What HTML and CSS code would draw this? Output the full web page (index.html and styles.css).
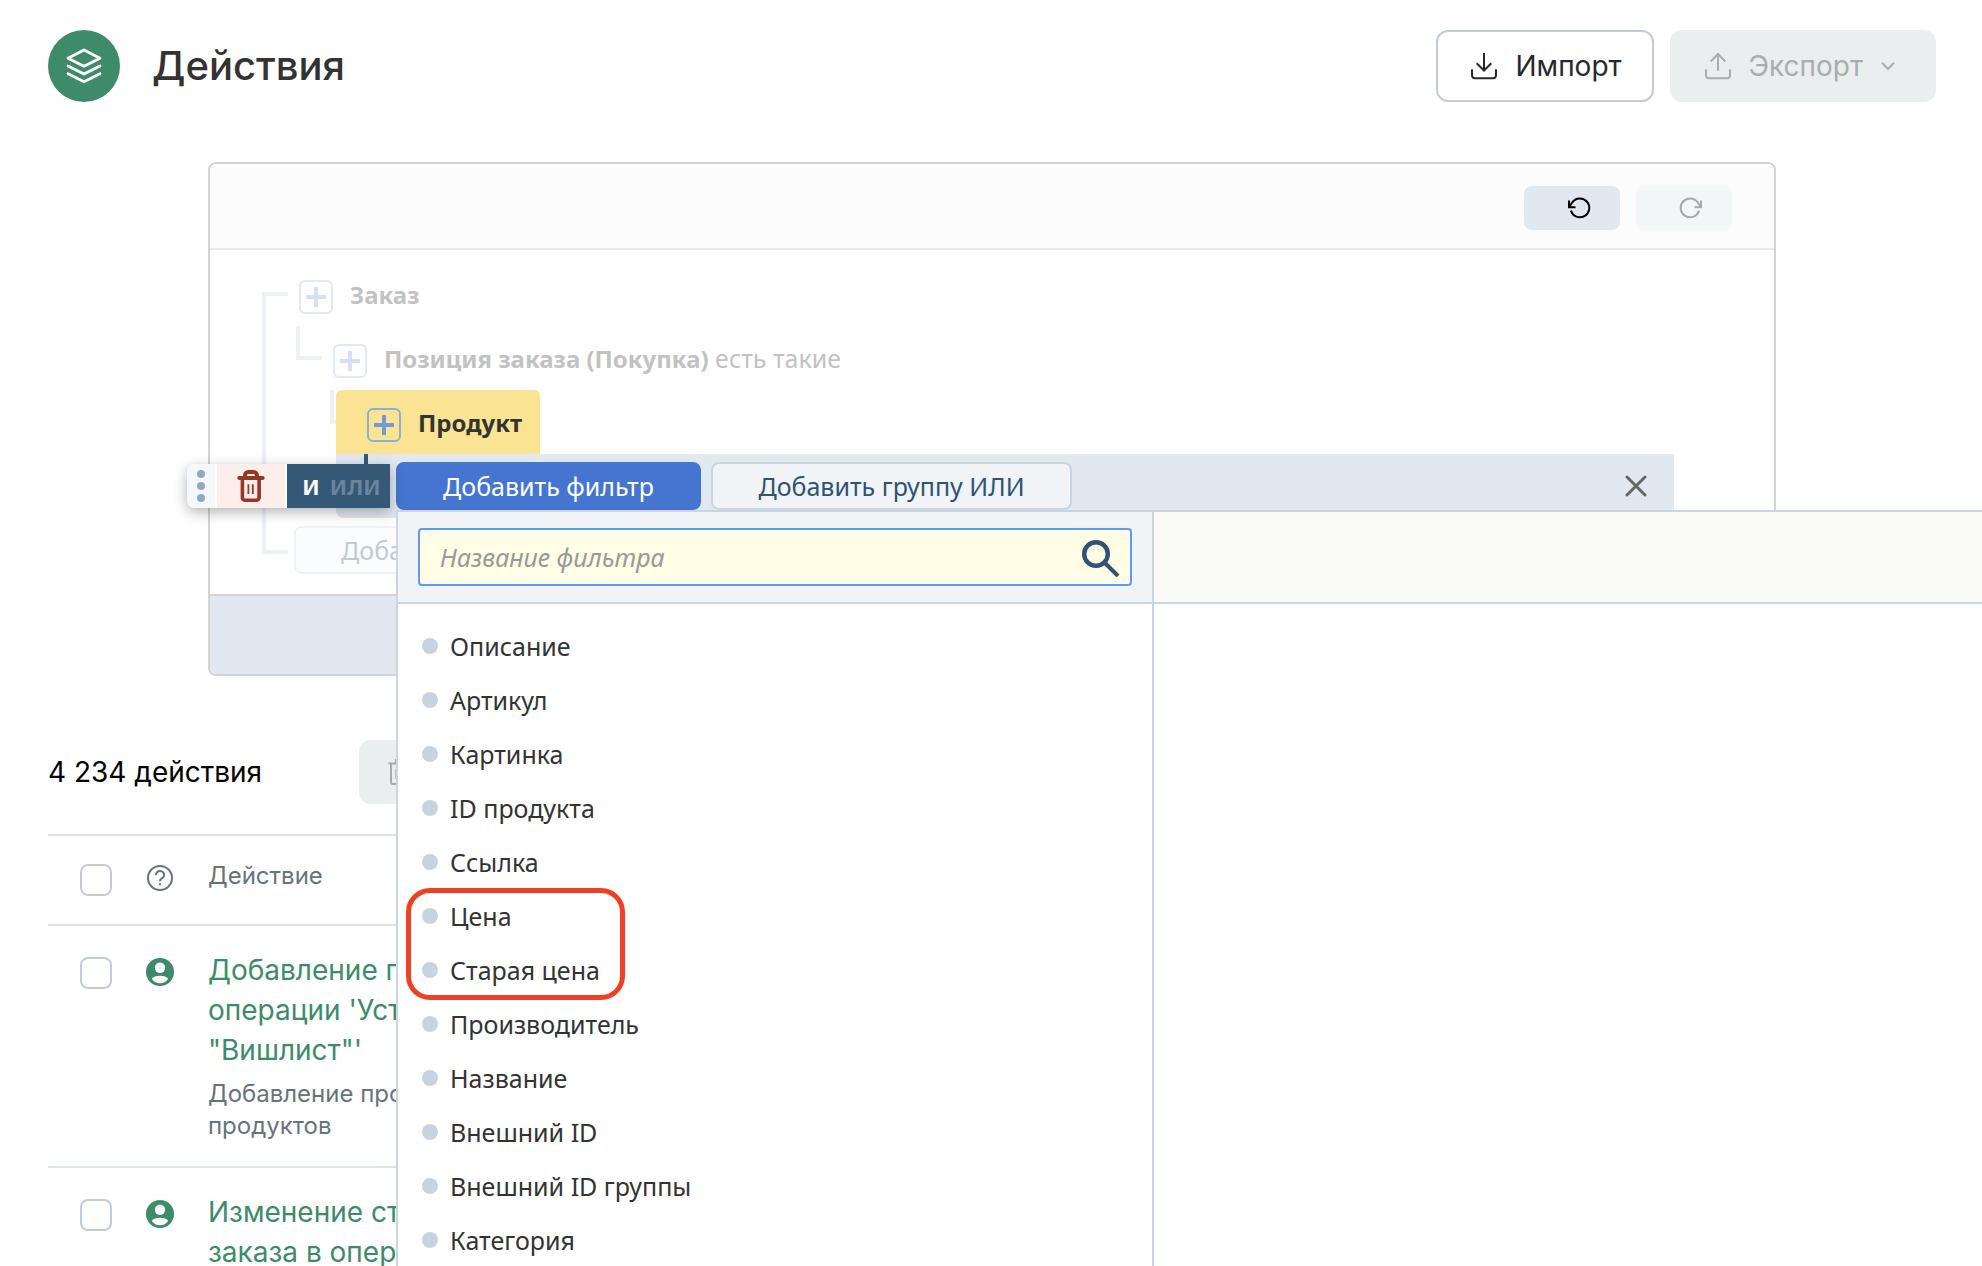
FILE: index.html
```html
<!DOCTYPE html>
<html lang="ru">
<head>
<meta charset="utf-8">
<meta name="viewport" content="width=device-width, initial-scale=1">
<title>Действия</title>
<link rel="stylesheet" href="styles.css">
</head>
<body>
<div class="page">
  <header class="page-header">
    <span class="page-logo">
      <svg width="36" height="36" viewBox="0 0 36 36" fill="none" stroke="#fff" stroke-width="2.8" stroke-linecap="round" stroke-linejoin="round" aria-hidden="true">
        <path d="M18 2 34 10.2 18 18.2 2 10.2Z"/>
        <path d="M2 18 18 26 34 18"/>
        <path d="M2 25.7 18 33.7 34 25.7"/>
      </svg>
    </span>
    <h1 class="page-title">Действия</h1>
    <div class="header-actions">
      <button class="btn btn-outline" type="button">
        <svg width="28" height="28" viewBox="0 0 28 28" fill="none" stroke="currentColor" stroke-width="2" aria-hidden="true">
          <path d="M14 1V18.5M6.7 11.3 14 18.5 21.3 11.3"/>
          <path d="M2 17.3V23.3A3 3 0 0 0 5 26.2H23A3 3 0 0 0 26 23.3V17.3"/>
        </svg>
        Импорт
      </button>
      <button class="btn btn-muted" type="button" disabled>
        <svg width="28" height="28" viewBox="0 0 28 28" fill="none" stroke="currentColor" stroke-width="2" aria-hidden="true">
          <path d="M14 18.7V2M6.7 9.5 14 2 21.3 9.5"/>
          <path d="M2 17.3V23.3A3 3 0 0 0 5 26.2H23A3 3 0 0 0 26 23.3V17.3"/>
        </svg>
        Экспорт
        <svg width="16" height="16" viewBox="0 0 16 16" fill="none" stroke="currentColor" stroke-width="2" aria-hidden="true">
          <path d="M2 4.8 8 11 14 4.8"/>
        </svg>
      </button>
    </div>
  </header>

  <section class="builder" aria-label="Фильтр">
    <div class="builder-toolbar">
      <button class="history-btn" type="button" aria-label="Отменить">
        <svg width="24" height="24" viewBox="0 0 24 24" fill="none" stroke="currentColor" stroke-width="2" aria-hidden="true">
          <path d="M1 4.5V11.3H7.5"/>
          <path d="M1 11.3 4.4 6.2A9.4 9.4 0 1 1 2.9 14.6"/>
        </svg>
      </button>
      <button class="history-btn" type="button" aria-label="Повторить" disabled>
        <svg width="24" height="24" viewBox="0 0 24 24" fill="none" stroke="currentColor" stroke-width="2" aria-hidden="true">
          <path d="M23 4.5V11.3H16.5"/>
          <path d="M23 11.3 19.6 6.2A9.4 9.4 0 1 0 21.1 14.6"/>
        </svg>
      </button>
    </div>

    <div class="tree">
      <span class="tree-bracket"></span>
      <div class="node node-root">
        <button class="add-btn" type="button" aria-label="Добавить в заказ"></button>
        <strong>Заказ</strong>
      </div>
      <div class="node node-child">
        <button class="add-btn" type="button" aria-label="Добавить в позицию"></button>
        <span><strong>Позиция заказа (Покупка)</strong> есть такие</span>
      </div>
      <div class="node node-active">
        <div class="node-label">
          <button class="add-btn" type="button" aria-label="Добавить в продукт"></button>
          <strong>Продукт</strong>
        </div>
      </div>

      <div class="group">
        <button class="filter-btn filter-btn-primary" type="button">Добавить фильтр</button>
        <button class="filter-btn filter-btn-wide" type="button">Добавить группу ИЛИ</button>
        <button class="close-btn" type="button" aria-label="Закрыть">
          <svg width="24" height="24" viewBox="0 0 24 24" fill="none" stroke="currentColor" stroke-width="3" stroke-linecap="round" aria-hidden="true">
            <path d="M3 3 21 21M21 3 3 21"/>
          </svg>
        </button>

        <div class="group-controls">
          <button class="drag-handle" type="button" aria-label="Переместить"><i></i><i></i><i></i></button>
          <button class="delete-btn" type="button" aria-label="Удалить группу">
            <svg width="28" height="32" viewBox="0 0 28 32" fill="none" stroke="currentColor" aria-hidden="true">
              <path d="M2.3 8H25.7" stroke-width="4" stroke-linecap="round"/>
              <path d="M8 7V5.4A3.4 3.4 0 0 1 11.4 2H16.6A3.4 3.4 0 0 1 20 5.4V7" stroke-width="4"/>
              <path d="M5.4 9V27.5A2.7 2.7 0 0 0 8.1 30.2H19.4A2.7 2.7 0 0 0 22.1 27.5V9" stroke-width="3.6"/>
              <path d="M11.4 14.3V24M15.8 14.3V24" stroke-width="1.8"/>
            </svg>
          </button>
          <button class="logic-btn" type="button"><b>И</b><b class="logic-off">ИЛИ</b></button>
        </div>

        <div class="picker">
          <div class="picker-search">
            <label class="search-box">
              <input class="search-input" type="text" placeholder="Название фильтра" aria-label="Название фильтра">
              <svg width="40" height="40" viewBox="0 0 40 40" fill="none" stroke="#2f5275" stroke-width="4.4" aria-hidden="true">
                <circle cx="16" cy="17" r="11.8"/>
                <path d="M25.5 26.5 38 39" stroke-width="4"/>
              </svg>
            </label>
          </div>
          <div class="picker-details-head"></div>
          <ul class="picker-list">
            <li>Описание</li>
            <li>Артикул</li>
            <li>Картинка</li>
            <li>ID продукта</li>
            <li>Ссылка</li>
            <li>Цена</li>
            <li>Старая цена</li>
            <li>Производитель</li>
            <li>Название</li>
            <li>Внешний ID</li>
            <li>Внешний ID группы</li>
            <li>Категория</li>
          </ul>
          <div class="picker-details"></div>
        </div>
      </div>

      <div class="tree-footer">
        <button class="filter-btn filter-btn-faded" type="button">Добавить фильтр</button>
      </div>
    </div>
    <div class="builder-footer"></div>
  </section>

  <div class="list-bar">
    <span class="list-count">4 234 действия</span>
    <button class="remove-btn" type="button" aria-label="Удалить" disabled>
      <svg width="28" height="28" viewBox="0 0 28 28" fill="none" stroke="currentColor" stroke-width="2" aria-hidden="true">
        <path d="M1.5 5.6H26.5M9 5.6V2H19V5.6M4 5.6V24A2 2 0 0 0 6 26H22A2 2 0 0 0 24 24V5.6M9.3 11V21M18.7 11V21"/>
      </svg>
    </button>
  </div>

  <table class="actions">
    <colgroup><col class="col-check"><col class="col-icon"><col></colgroup>
    <thead>
      <tr>
        <th class="cell-check"><input class="check" type="checkbox" aria-label="Выбрать все"></th>
        <th class="cell-icon">
          <svg width="28" height="28" viewBox="0 0 28 28" fill="none" stroke="#66747a" stroke-width="2" aria-hidden="true">
            <circle cx="14" cy="14" r="12"/>
            <path d="M10 11.2A4.1 3.9 0 1 1 16.5 14C14.8 15 14 15.3 14 17.2"/>
            <path d="M14 19.2V21.2"/>
          </svg>
        </th>
        <th>Действие</th>
      </tr>
    </thead>
    <tbody>
      <tr>
        <td class="cell-check"><input class="check" type="checkbox" aria-label="Выбрать действие"></td>
        <td class="cell-icon">
          <svg width="28" height="28" viewBox="0 0 28 28" aria-hidden="true">
            <circle cx="14" cy="14" r="14" fill="#3d8b69"/>
            <circle cx="14" cy="9.8" r="5.2" fill="#fff"/>
            <path d="M5.7 20.7Q8 17.8 14 17.8T22.3 20.7Q19 25.3 14 25.3T5.7 20.7Z" fill="#fff"/>
          </svg>
        </td>
        <td>
          <a class="action-link" href="#">Добавление п<br>операции 'Уст<br>"Вишлист"'</a>
          <p class="action-note">Добавление про<br>продуктов</p>
        </td>
      </tr>
      <tr>
        <td class="cell-check"><input class="check" type="checkbox" aria-label="Выбрать действие"></td>
        <td class="cell-icon">
          <svg width="28" height="28" viewBox="0 0 28 28" aria-hidden="true">
            <circle cx="14" cy="14" r="14" fill="#3d8b69"/>
            <circle cx="14" cy="9.8" r="5.2" fill="#fff"/>
            <path d="M5.7 20.7Q8 17.8 14 17.8T22.3 20.7Q19 25.3 14 25.3T5.7 20.7Z" fill="#fff"/>
          </svg>
        </td>
        <td><a class="action-link" href="#">Изменение ст<br>заказа в опер</a></td>
      </tr>
    </tbody>
  </table>
</div>
</body>
</html>
```
FILE: styles.css
```css
*,
*::before,
*::after { box-sizing: border-box; }

body {
  margin: 0;
  font-family: Inter, "Liberation Sans", sans-serif;
  font-size: 28px;
  color: #333;
  background: #fff;
}

button {
  margin: 0;
  padding: 0;
  border: 0;
  background: none;
  font: inherit;
  color: inherit;
}

svg { display: block; flex: none; }

.page {
  height: 100vh;
  overflow: hidden;
  padding: 30px 46px 0 48px;
}

/* Header */
.page-header { display: flex; align-items: center; }

.page-logo {
  display: flex;
  align-items: center;
  justify-content: center;
  width: 72px;
  height: 72px;
  border-radius: 50%;
  background: #3d8b69;
}

.page-title {
  margin: 0 0 0 32px;
  font-size: 40px;
  font-weight: 500;
  line-height: 46px;
}

.header-actions { display: flex; gap: 16px; margin-left: auto; }

.btn {
  display: flex;
  align-items: center;
  gap: 17px;
  height: 72px;
  padding: 0 30px 0 32px;
  border: 2px solid transparent;
  border-radius: 12px;
}

.btn-outline { border-color: #c0cdd6; color: #26282e; background: #fff; }
.btn-muted { padding-right: 38px; color: #a9adae; background: #eaeeef; }

/* Filter builder */
.builder {
  margin: 60px 160px 0;
  border: 2px solid #d3d3d3;
  border-radius: 8px;
  font-family: "Noto Sans", "Open Sans", sans-serif;
  font-size: 25px;
}

.builder-toolbar {
  display: flex;
  justify-content: flex-end;
  gap: 16px;
  padding: 22px 42px 18px;
  border-bottom: 2px solid #e4eaee;
  border-radius: 6px 6px 0 0;
  background: #fcfcfc;
}

.history-btn {
  display: flex;
  align-items: center;
  justify-content: center;
  width: 96px;
  height: 44px;
  padding-left: 16px;
  border-radius: 8px;
  background: #e1e8ef;
  color: #000;
}

.history-btn:disabled { padding-left: 12px; background: #f2f6f7; color: #a8a8a8; }

.builder-footer {
  height: 80px;
  border-top: 2px solid #d3d3d3;
  border-radius: 0 0 6px 6px;
  background: #e1e8ef;
}

.tree { position: relative; padding: 12px 0 12px 84px; }

.tree-bracket {
  position: absolute;
  top: 42px;
  left: 52px;
  width: 26px;
  height: 262px;
  border: 4px solid #edf1f6;
  border-right: 0;
}

.node {
  position: relative;
  display: flex;
  align-items: center;
  gap: 17px;
  height: 64px;
  color: #c2c2c2;
}

.node strong { font-size: 24px; }

.node-root { padding-left: 5px; }
.node-child { padding-left: 39px; }
.node-active { padding-left: 42px; color: #333; }

.node-child::before,
.node-active::before {
  content: "";
  position: absolute;
  top: 0;
  left: 2px;
  width: 26px;
  height: 34px;
  border: solid #edf1f6;
  border-width: 0 0 4px 4px;
}

.node-active::before { left: 36px; }

.node-label {
  position: relative;
  display: flex;
  align-items: center;
  gap: 17px;
  height: 64px;
  padding: 0 18px 0 31px;
  border-radius: 6px 6px 0 0;
  background: #fae392;
}

.add-btn {
  width: 34px;
  height: 34px;
  margin-top: 6px;
  border: 2px solid #dfe7f8;
  border-radius: 6px;
  color: #d6e0f5;
  background:
    linear-gradient(currentColor, currentColor) center / 20px 4px no-repeat,
    linear-gradient(currentColor, currentColor) center / 4px 20px no-repeat;
}

.node-label .add-btn { border-color: #93add0; color: #7299dc; }

.group {
  position: relative;
  display: flex;
  align-items: flex-start;
  gap: 10px;
  height: 64px;
  margin: 0 100px 0 42px;
  padding: 8px 26px 0 60px;
  border-radius: 0 0 8px 8px;
  background: #e1e8ef;
}

.group::before {
  content: "";
  position: absolute;
  top: 0;
  left: 28px;
  width: 4px;
  height: 10px;
  background: #355877;
}

.filter-btn {
  min-width: 305px;
  height: 48px;
  border: 2px solid #c9d5df;
  border-radius: 8px;
  background: #f0f4f7;
  color: #2f5275;
}

.filter-btn-wide { min-width: 361px; }
.filter-btn-primary { border-color: #4575d1; background: #4575d1; color: #fff; }
.filter-btn-faded { border-color: #eff2f5; background: #fbfcfd; color: #c0cbd6; }

.close-btn { margin: 12px 0 0 auto; color: #666; }

.tree-footer { display: flex; align-items: center; height: 64px; }

.group-controls {
  position: absolute;
  top: 10px;
  left: -149px;
  display: flex;
  gap: 2px;
  height: 44px;
  border-radius: 8px 0 0 8px;
  background: #fff;
  box-shadow: 0 4px 14px rgba(0, 0, 0, 0.3);
}

.drag-handle {
  display: flex;
  flex-direction: column;
  align-items: center;
  justify-content: center;
  gap: 4px;
  width: 28px;
  border-radius: 8px 0 0 8px;
  background: #f5f8fb;
}

.drag-handle i {
  width: 8px;
  height: 8px;
  border-radius: 50%;
  background: #8faac0;
}

.delete-btn {
  display: flex;
  align-items: center;
  justify-content: center;
  width: 68px;
  background: #fdeeeb;
  color: #963726;
}

.logic-btn {
  display: flex;
  align-items: center;
  justify-content: center;
  gap: 10px;
  width: 103px;
  padding-left: 6px;
  background: #355877;
  color: #fff;
  font-size: 22px;
}

.logic-off { color: #6a849b; }

/* Filter picker */
.picker {
  position: absolute;
  z-index: 2;
  top: 56px;
  left: 60px;
  display: grid;
  grid-template-columns: 756px 1fr;
  width: calc(100vw - 396px);
  border: solid #c9d5df;
  border-width: 2px 0 0 2px;
  background: #fff;
}

.picker-search,
.picker-details-head { border-bottom: 2px solid #c9d5df; }

.picker-search,
.picker-list { border-right: 2px solid #c9d5df; }

.picker-search { padding: 16px 20px; background: #f0f4f7; }
.picker-details-head { background: #fafbf6; }

.search-box {
  display: flex;
  align-items: center;
  height: 58px;
  padding: 0 10px 0 20px;
  border: 2px solid #6496f5;
  border-radius: 4px;
  background: #fffde6;
}

.search-input {
  flex: 1;
  min-width: 0;
  padding: 0;
  border: 0;
  outline: 0;
  background: none;
  font: inherit;
}

.search-input::placeholder { color: #999; font-style: italic; opacity: 1; }

.picker-list {
  position: relative;
  margin: 0;
  padding: 15px 24px;
  list-style: none;
}

.picker-list li {
  display: flex;
  align-items: center;
  gap: 12px;
  height: 54px;
}

.picker-list li::before {
  content: "";
  width: 16px;
  height: 16px;
  border-radius: 50%;
  background: #c8d3e0;
}

/* Red outline round the price filters */
.picker-list::after {
  content: "";
  position: absolute;
  top: 284px;
  left: 8px;
  width: 219px;
  height: 112px;
  border: 5px solid #ef4023;
  border-radius: 24px;
}

/* Actions list */
.list-bar {
  display: flex;
  align-items: center;
  height: 64px;
  margin-top: 64px;
  color: #000;
}

.list-count { width: 311px; }

.remove-btn {
  height: 64px;
  padding: 0 28px;
  border-radius: 12px;
  background: #eaeeef;
  color: #a9a9a9;
}

.actions {
  width: 100%;
  margin-top: 30px;
  border-top: 2px solid #dce4e8;
  border-spacing: 0;
  table-layout: fixed;
}

.col-check,
.col-icon { width: 80px; }

.actions th,
.actions td {
  padding: 24px 0;
  border-bottom: 2px solid #dce4e8;
  text-align: left;
  vertical-align: top;
}

.actions th {
  height: 90px;
  color: #66747a;
  font-size: 24px;
  font-weight: 400;
  line-height: 32px;
}

.actions .cell-check { padding-left: 32px; }
.actions .cell-icon { padding-left: 18px; }
.actions td.cell-check { padding-top: 27px; }
.actions td.cell-icon { padding-top: 28px; }
.cell-icon svg { margin-top: 4px; }

.check {
  display: block;
  width: 32px;
  height: 32px;
  margin: 4px 0 0;
  appearance: none;
  border: 2px solid #c1cdd6;
  border-radius: 8px;
  background: #fff;
}

.action-link {
  display: block;
  color: #3d8b69;
  line-height: 40px;
  text-decoration: none;
}

.action-note {
  margin: 8px 0 0;
  color: #66747a;
  font-size: 24px;
  line-height: 32px;
}
```
